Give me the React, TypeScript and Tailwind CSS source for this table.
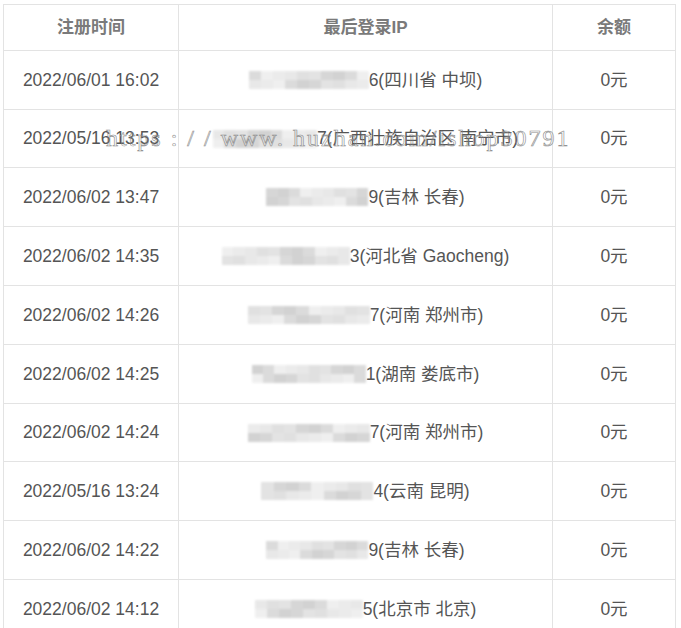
import React from "react";

type Row = { time: string; w: number; tail: string; h: string };

const rows: Row[] = [
  { time: "2022/06/01 16:02", w: 120, tail: "6(四川省 中坝)", h: "h-[59px]" },
  { time: "2022/05/16 13:53", w: 104, tail: "7(广西壮族自治区 南宁市)", h: "h-[58px]" },
  { time: "2022/06/02 13:47", w: 102, tail: "9(吉林 长春)", h: "h-[59px]" },
  { time: "2022/06/02 14:35", w: 128, tail: "3(河北省 Gaocheng)", h: "h-[59px]" },
  { time: "2022/06/02 14:26", w: 122, tail: "7(河南 郑州市)", h: "h-[59px]" },
  { time: "2022/06/02 14:25", w: 114, tail: "1(湖南 娄底市)", h: "h-[59px]" },
  { time: "2022/06/02 14:24", w: 122, tail: "7(河南 郑州市)", h: "h-[58px]" },
  { time: "2022/05/16 13:24", w: 112, tail: "4(云南 昆明)", h: "h-[59px]" },
  { time: "2022/06/02 14:22", w: 102, tail: "9(吉林 长春)", h: "h-[59px]" },
  { time: "2022/06/02 14:12", w: 108, tail: "5(北京市 北京)", h: "h-[59px]" },
];

const shades = ["#d8d8d8", "#e6e6e6", "#d2d2d2", "#eeeeee", "#dddddd", "#cecece", "#e9e9e9", "#e0e0e0"];

function Mosaic({ w, seed }: { w: number; seed: number }) {
  const n = Math.round(w / 12);
  const cells = Array.from({ length: n }, (_, i) => i);
  return (
    <span className="inline-flex flex-col h-[18px] blur-[0.8px] opacity-90" style={{ width: w }}>
      <span className="flex flex-1">
        {cells.map((i) => (
          <span key={i} className="flex-1" style={{ background: shades[(i * 3 + seed) % shades.length] }} />
        ))}
      </span>
      <span className="flex flex-1">
        {cells.map((i) => (
          <span key={i} className="flex-1" style={{ background: shades[(i * 5 + seed * 2 + 1) % shades.length] }} />
        ))}
      </span>
    </span>
  );
}

export default function App() {
  return (
    <div className="relative w-[681px] h-[628px] overflow-hidden bg-white pt-[4px] pl-[3px] font-['Liberation_Sans','Noto_Sans_CJK_SC',sans-serif]">
      <div className="w-[673px] border-l border-t border-r border-[#e3e3e3]">
        <div className="grid grid-cols-[175px_374px_1fr] h-[46px] border-b border-[#e3e3e3] text-[17px] font-bold text-[#7a7a7a]">
          <div className="flex items-center justify-center border-r border-[#e3e3e3]">注册时间</div>
          <div className="flex items-center justify-center border-r border-[#e3e3e3]">最后登录IP</div>
          <div className="flex items-center justify-center">余额</div>
        </div>
        {rows.map((r, i) => (
          <div
            key={i}
            className={`grid grid-cols-[175px_374px_1fr] ${r.h} border-b border-[#e3e3e3] text-[17.5px] text-[#555]`}
          >
            <div className="flex items-center justify-center border-r border-[#e3e3e3]">{r.time}</div>
            <div className="flex items-center justify-center border-r border-[#e3e3e3]">
              <Mosaic w={r.w} seed={i} />
              <span>{r.tail}</span>
            </div>
            <div className="flex items-center justify-center">0元</div>
          </div>
        ))}
      </div>
      <div className="absolute left-[106px] top-[120px] text-[24px] tracking-[2px] text-transparent [-webkit-text-stroke:0.6px_#8a8a8a] font-['Liberation_Serif',serif] whitespace-nowrap pointer-events-none">
        https : / / www. huzhan.com/ishop30791
      </div>
    </div>
  );
}
